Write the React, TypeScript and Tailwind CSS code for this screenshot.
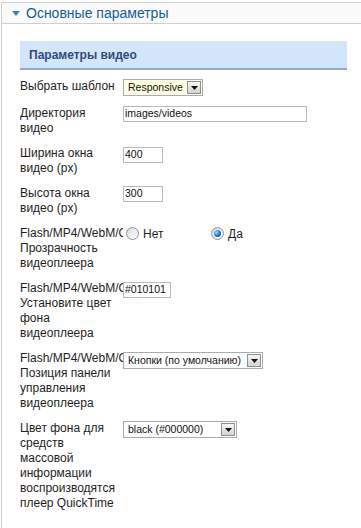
import clsx from 'clsx';

// small Windows-classic style controls, drawn with plain divs

function DropArrow() {
  return (
    <span className="flex h-[13px] w-[14px] shrink-0 items-center justify-center border border-[#8e8f8f] bg-linear-to-b from-[#f6f6f6] to-[#d3d3d3]">
      <svg width="7" height="4" viewBox="0 0 7 4">
        <polygon points="0,0 7,0 3.5,4" fill="#111" />
      </svg>
    </span>
  );
}

function Select({ value, className }: { value: string; className: string }) {
  return (
    <div
      className={clsx(
        'flex h-[17px] shrink-0 items-center justify-between border border-[#a5acb2] pl-[4px] pr-[1px] text-[10.5px] text-[#111]',
        className
      )}
    >
      <span className="whitespace-nowrap">{value}</span>
      <DropArrow />
    </div>
  );
}

function TextInput({ value, className }: { value: string; className: string }) {
  return (
    <div
      className={clsx(
        'flex h-[16px] shrink-0 items-center border border-[#b9b9b9] bg-white pl-[1px] text-[10.5px] text-[#111]',
        className
      )}
    >
      {value}
    </div>
  );
}

function Radio({ checked }: { checked?: boolean }) {
  return (
    <span className="flex h-[13px] w-[13px] shrink-0 items-center justify-center rounded-full border border-[#8c8f93] bg-linear-to-br from-[#dcdcdc] to-white">
      {checked && (
        <span className="h-[7px] w-[7px] rounded-full bg-[radial-gradient(circle_at_35%_35%,#a8dcff,#1c73bd_55%,#0b4a85)]" />
      )}
    </span>
  );
}

function Row({ lines, children }: { lines: string[]; children: React.ReactNode }) {
  return (
    <div className="flex items-start">
      <div className="w-[103px] shrink-0 overflow-hidden pr-[6px] leading-[15px]">
        {lines.map((l, i) => (
          <div key={i} className="whitespace-nowrap">
            {l}
          </div>
        ))}
      </div>
      {children}
    </div>
  );
}

export default function App() {
  return (
    <div className="min-h-[528px] bg-white font-['Liberation_Sans',Arial,sans-serif]">
      <div className="ml-[1px] mt-[2px] min-h-[526px] border-l border-[#cfcfcf]">
        {/* panel header */}
        <div className="flex h-[22px] items-center border-y border-[#cfcfcf] bg-[#fafafa] pl-[10px]">
          <svg width="8" height="5" viewBox="0 0 8 5" className="mr-[6px]">
            <polygon points="0,0 8,0 4,5" fill="#2b8ad2" />
          </svg>
          <span className="text-[14px] leading-none text-[#145d94]">Основные параметры</span>
        </div>

        <div className="pl-[18px] pt-[17px]">
          <div className="flex h-[29px] w-[327px] items-center border-b-2 border-[#93aac8] bg-[#d3e5f9] pl-[9px] text-[12px] font-bold text-[#2f4d7d]">
            Параметры видео
          </div>

          <div className="mt-[9px] flex flex-col gap-[10px] text-[12px] text-[#1e1e1e]">
            <Row lines={['Выбрать шаблон']}>
              <Select value="Responsive" className="w-[80px] bg-[#ffffe1]" />
            </Row>
            <Row lines={['Директория', 'видео']}>
              <TextInput value="images/videos" className="w-[184px]" />
            </Row>
            <Row lines={['Ширина окна', 'видео (px)']}>
              <TextInput value="400" className="mt-[1px] w-[40px]" />
            </Row>
            <Row lines={['Высота окна', 'видео (px)']}>
              <TextInput value="300" className="w-[40px]" />
            </Row>
            <Row lines={['Flash/MP4/WebM/Ogg', 'Прозрачность', 'видеоплеера']}>
              <div className="flex h-[15px] items-center">
                <div className="ml-[3px] flex w-[85px] items-center gap-[4px]">
                  <Radio />
                  <span>Нет</span>
                </div>
                <div className="flex items-center gap-[4px]">
                  <Radio checked />
                  <span>Да</span>
                </div>
              </div>
            </Row>
            <Row lines={['Flash/MP4/WebM/Ogg', 'Установите цвет', 'фона', 'видеоплеера']}>
              <TextInput value="#010101" className="mt-[1px] w-[48px]" />
            </Row>
            <Row lines={['Flash/MP4/WebM/Ogg', 'Позиция панели', 'управления', 'видеоплеера']}>
              <Select value="Кнопки (по умолчанию)" className="mt-[1px] w-[140px] bg-white" />
            </Row>
            <Row
              lines={[
                'Цвет фона для',
                'средств',
                'массовой',
                'информации',
                'воспроизводятся',
                'плеер QuickTime',
              ]}
            >
              <Select value="black (#000000)" className="w-[114px] bg-white" />
            </Row>
          </div>
        </div>
      </div>
    </div>
  );
}
